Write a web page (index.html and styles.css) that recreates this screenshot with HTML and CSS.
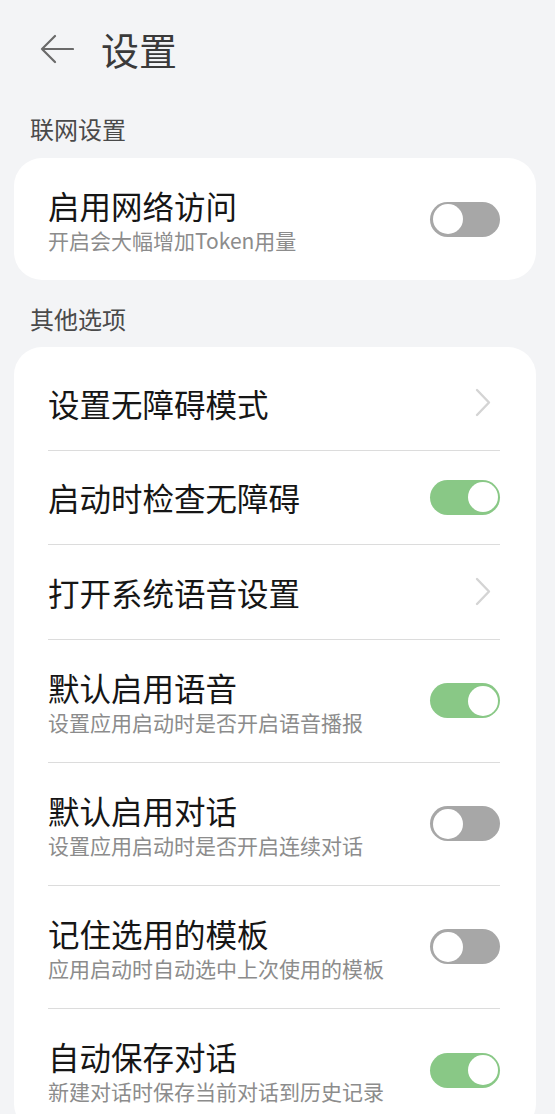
FILE: index.html
```html
<!DOCTYPE html>
<html lang="zh-CN">
<head>
<meta charset="utf-8">
<title>设置</title>
<link rel="stylesheet" href="styles.css">
</head>
<body>
<header class="topbar">
  <svg class="back" width="34" height="30" viewBox="0 0 34 30" aria-hidden="true">
    <path d="M33 15 H2 M15 2 L2 15 L15 28" fill="none" stroke="#6a6a6a" stroke-width="2.2" stroke-linecap="round" stroke-linejoin="round"/>
  </svg>
  <h1 class="page-title">设置</h1>
</header>

<div class="section-label first">联网设置</div>
<section class="card card-single">
  <div class="row row-two last">
    <div class="texts">
      <div class="title">启用网络访问</div>
      <div class="sub">开启会大幅增加Token用量</div>
    </div>
    <div class="toggle"><span class="knob"></span></div>
  </div>
</section>

<div class="section-label">其他选项</div>
<section class="card card-list">
  <div class="row row-one">
    <div class="texts"><div class="title">设置无障碍模式</div></div>
    <svg class="chev" width="16" height="29" viewBox="0 0 16 29" aria-hidden="true"><path d="M2 2 L14 14.5 L2 27" fill="none" stroke="#d4d4d4" stroke-width="2.4" stroke-linecap="round" stroke-linejoin="round"/></svg>
  </div>
  <div class="row row-one">
    <div class="texts"><div class="title">启动时检查无障碍</div></div>
    <div class="toggle on"><span class="knob"></span></div>
  </div>
  <div class="row row-one">
    <div class="texts"><div class="title">打开系统语音设置</div></div>
    <svg class="chev" width="16" height="29" viewBox="0 0 16 29" aria-hidden="true"><path d="M2 2 L14 14.5 L2 27" fill="none" stroke="#d4d4d4" stroke-width="2.4" stroke-linecap="round" stroke-linejoin="round"/></svg>
  </div>
  <div class="row row-two">
    <div class="texts">
      <div class="title">默认启用语音</div>
      <div class="sub">设置应用启动时是否开启语音播报</div>
    </div>
    <div class="toggle on"><span class="knob"></span></div>
  </div>
  <div class="row row-two">
    <div class="texts">
      <div class="title">默认启用对话</div>
      <div class="sub">设置应用启动时是否开启连续对话</div>
    </div>
    <div class="toggle"><span class="knob"></span></div>
  </div>
  <div class="row row-two">
    <div class="texts">
      <div class="title">记住选用的模板</div>
      <div class="sub">应用启动时自动选中上次使用的模板</div>
    </div>
    <div class="toggle"><span class="knob"></span></div>
  </div>
  <div class="row row-two last">
    <div class="texts">
      <div class="title">自动保存对话</div>
      <div class="sub">新建对话时保存当前对话到历史记录</div>
    </div>
    <div class="toggle on"><span class="knob"></span></div>
  </div>
</section>
</body>
</html>
```

FILE: styles.css
```css
html, body {
  margin: 0;
  padding: 0;
  background: #f3f4f6;
}
body {
  font-family: "Noto Sans CJK SC", "Noto Sans", sans-serif;
  color: #1a1a1a;
  overflow: hidden;
}
.topbar {
  display: flex;
  align-items: center;
  height: 98px;
  padding-left: 40px;
  gap: 27px;
}
.back {
  display: block;
  flex: none;
}
.page-title {
  margin: 0;
  font-size: 38px;
  font-weight: 400;
  line-height: 44px;
  color: #3a3a3a;
}
.section-label {
  font-size: 24px;
  line-height: 32px;
  color: #4a4a4a;
  padding-left: 30px;
  margin: 23px 0 12px;
}
.section-label.first {
  margin-top: 15px;
  margin-bottom: 13px;
}
.card {
  background: #ffffff;
  border-radius: 28px;
  margin: 0 19px 0 14px;
}
.card-list {
  padding-top: 9px;
}
.row {
  display: flex;
  align-items: center;
  justify-content: space-between;
  margin: 0 36px 0 34px;
  border-bottom: 1px solid #dcdcdc;
  box-sizing: border-box;
}
.row.last {
  border-bottom: none;
}
.row-one {
  height: 94.5px;
}
.row-two {
  height: 123px;
}
.card-single .row-two {
  height: 122px;
}
.title {
  font-size: 31.5px;
  line-height: 42px;
  color: #161616;
  white-space: nowrap;
}
.sub {
  font-size: 21px;
  line-height: 28px;
  color: #8c8c8c;
  white-space: nowrap;
}
.chev {
  display: block;
  flex: none;
  margin-right: 9px;
}
.toggle {
  flex: none;
  width: 70px;
  height: 35px;
  border-radius: 17.5px;
  background: #a7a7a7;
  box-sizing: border-box;
  padding: 2.5px;
  display: flex;
  justify-content: flex-start;
}
.toggle.on {
  background: #89c886;
  justify-content: flex-end;
}
.knob {
  display: block;
  width: 30px;
  height: 30px;
  border-radius: 50%;
  background: #ffffff;
}
```
